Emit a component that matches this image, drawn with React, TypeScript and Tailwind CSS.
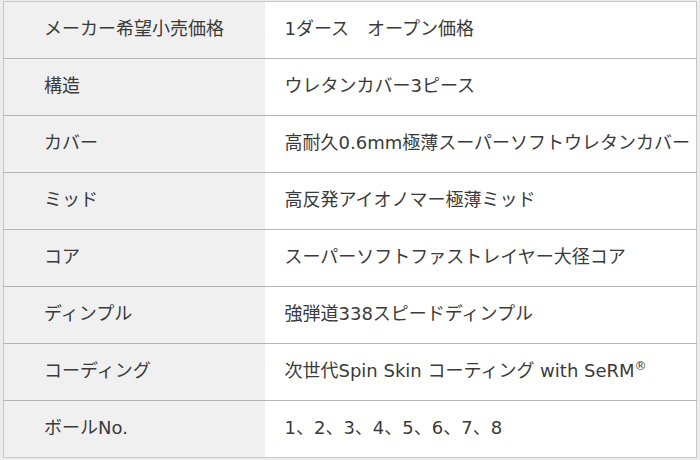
const rows: [string, React.ReactNode][] = [
  ['メーカー希望小売価格', '1ダース　オープン価格'],
  ['構造', 'ウレタンカバー3ピース'],
  ['カバー', '高耐久0.6mm極薄スーパーソフトウレタンカバー'],
  ['ミッド', '高反発アイオノマー極薄ミッド'],
  ['コア', 'スーパーソフトファストレイヤー大径コア'],
  ['ディンプル', '強弾道338スピードディンプル'],
  [
    'コーディング',
    <>
      次世代Spin Skin コーティング with SeRM
      <span className="relative top-[-7px] text-[12px]">®</span>
    </>,
  ],
  ['ボールNo.', '1、2、3、4、5、6、7、8'],
];

const App = () => {
  return (
    <div
      className="w-[700px] h-[460px] bg-[#ececec] pt-px pl-[3px] text-[#3a3a3a] text-[18px]"
      style={{ fontFamily: '"DejaVu Sans", "Noto Sans CJK JP", sans-serif' }}
    >
      <table className="w-[694px] border-collapse border border-[#c8c8c8]">
        <tbody>
          {rows.map(([label, value], i) => (
            <tr key={i} className="h-[57px] border-b border-[#b4b4b4] last:border-b-0">
              <td className="w-[261px] bg-[#f0f0f0] pl-10 pb-[3px] align-middle">{label}</td>
              <td className="bg-white pl-5 pb-[3px] align-middle">{value}</td>
            </tr>
          ))}
        </tbody>
      </table>
    </div>
  );
};

export default App;
